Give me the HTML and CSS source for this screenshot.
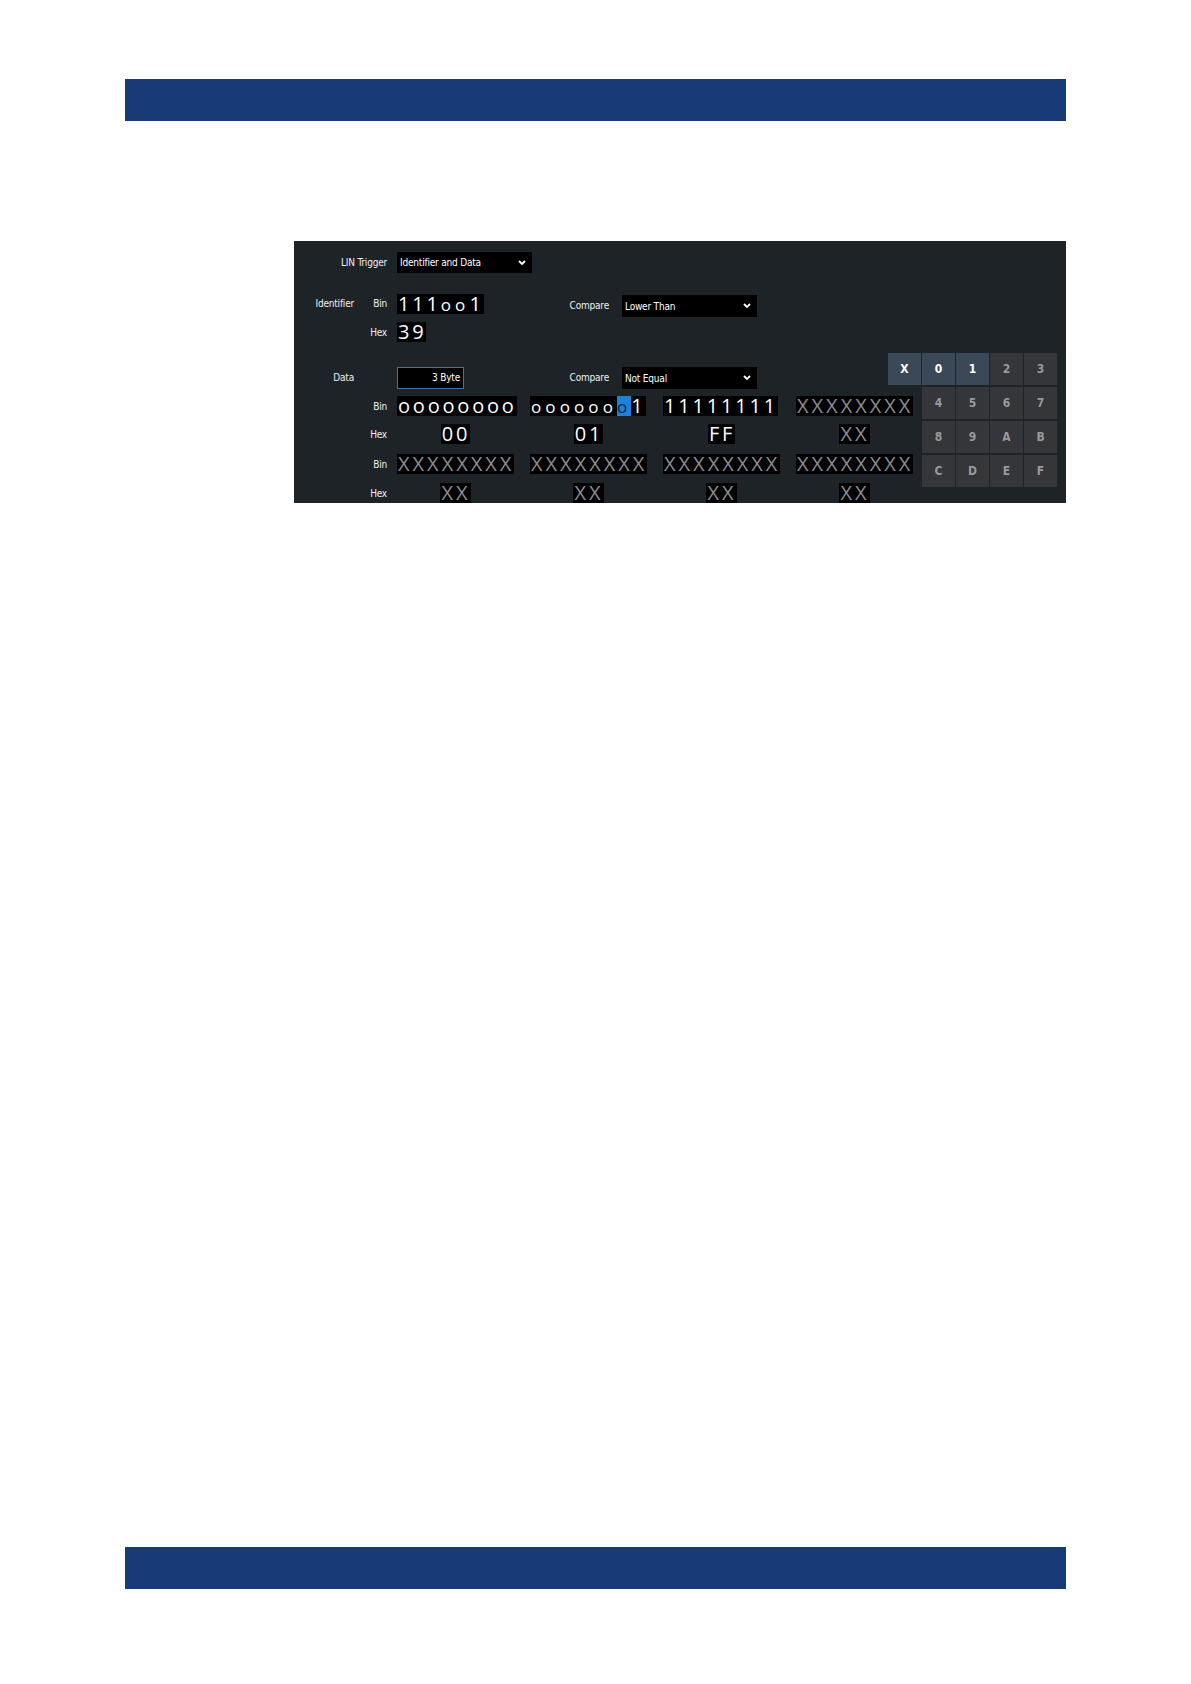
FILE: index.html
```html
<!DOCTYPE html>
<html>
<head>
<meta charset="utf-8">
<link rel="stylesheet" href="styles.css">
</head>
<body>
<div class="bar bar-top"></div>

<div class="panel">
  <div class="row row-a">
    <span class="lbl lbl-wide">LIN Trigger</span>
    <div class="select">
      <span>Identifier and Data</span>
      <svg class="chev" width="8" height="6" viewBox="0 0 8 6"><polyline points="1,1 4,4 7,1" fill="none" stroke="#fff" stroke-width="1.8"/></svg>
    </div>
  </div>

  <div class="row row-b">
    <span class="lbl lbl-main">Identifier</span>
    <span class="lbl lbl-sub">Bin</span>
    <div class="vals">
      <div class="cell"><span class="digits">111<span class="so">oo</span>1</span></div>
      <div class="compare">
        <span class="lbl lbl-cmp">Compare</span>
        <div class="select">
          <span>Lower Than</span>
          <svg class="chev" width="8" height="6" viewBox="0 0 8 6"><polyline points="1,1 4,4 7,1" fill="none" stroke="#fff" stroke-width="1.8"/></svg>
        </div>
      </div>
    </div>
  </div>

  <div class="row row-c">
    <span class="lbl lbl-main"></span>
    <span class="lbl lbl-sub">Hex</span>
    <div class="vals">
      <div class="cell"><span class="digits">39</span></div>
    </div>
  </div>

  <div class="row row-d">
    <span class="lbl lbl-main">Data</span>
    <span class="lbl lbl-sub"></span>
    <div class="vals">
      <div class="cell"><div class="input">3 Byte</div></div>
      <div class="compare">
        <span class="lbl lbl-cmp">Compare</span>
        <div class="select">
          <span>Not Equal</span>
          <svg class="chev" width="8" height="6" viewBox="0 0 8 6"><polyline points="1,1 4,4 7,1" fill="none" stroke="#fff" stroke-width="1.8"/></svg>
        </div>
      </div>
    </div>
  </div>

  <div class="row row-e">
    <span class="lbl lbl-main"></span>
    <span class="lbl lbl-sub">Bin</span>
    <div class="vals grid4">
      <div class="cell"><span class="digits">oooooooo</span></div>
      <div class="cell"><span class="digits"><span class="so">oooooo</span><span class="cursor"><span class="so">o</span></span>1</span></div>
      <div class="cell"><span class="digits">11111111</span></div>
      <div class="cell"><span class="digits undef">XXXXXXXX</span></div>
    </div>
  </div>

  <div class="row row-f">
    <span class="lbl lbl-main"></span>
    <span class="lbl lbl-sub">Hex</span>
    <div class="vals grid4 center">
      <div class="cell"><span class="digits">00</span></div>
      <div class="cell"><span class="digits">01</span></div>
      <div class="cell"><span class="digits">FF</span></div>
      <div class="cell"><span class="digits undef">XX</span></div>
    </div>
  </div>

  <div class="row row-g">
    <span class="lbl lbl-main"></span>
    <span class="lbl lbl-sub">Bin</span>
    <div class="vals grid4">
      <div class="cell"><span class="digits undef">XXXXXXXX</span></div>
      <div class="cell"><span class="digits undef">XXXXXXXX</span></div>
      <div class="cell"><span class="digits undef">XXXXXXXX</span></div>
      <div class="cell"><span class="digits undef">XXXXXXXX</span></div>
    </div>
  </div>

  <div class="row row-h">
    <span class="lbl lbl-main"></span>
    <span class="lbl lbl-sub">Hex</span>
    <div class="vals grid4 center">
      <div class="cell"><span class="digits undef">XX</span></div>
      <div class="cell"><span class="digits undef">XX</span></div>
      <div class="cell"><span class="digits undef">XX</span></div>
      <div class="cell"><span class="digits undef">XX</span></div>
    </div>
  </div>

  <div class="keypad">
    <div class="key key-act">X</div>
    <div class="key key-act">0</div>
    <div class="key key-act">1</div>
    <div class="key">2</div>
    <div class="key">3</div>
    <div class="key-empty"></div>
    <div class="key">4</div>
    <div class="key">5</div>
    <div class="key">6</div>
    <div class="key">7</div>
    <div class="key-empty"></div>
    <div class="key">8</div>
    <div class="key">9</div>
    <div class="key">A</div>
    <div class="key">B</div>
    <div class="key-empty"></div>
    <div class="key">C</div>
    <div class="key">D</div>
    <div class="key">E</div>
    <div class="key">F</div>
  </div>
</div>

<div class="bar bar-bottom"></div>
</body>
</html>
```

FILE: styles.css
```css
html, body {
  margin: 0;
  padding: 0;
  background: #ffffff;
}

body {
  width: 1191px;
  font-family: "DejaVu Sans Condensed", "DejaVu Sans", sans-serif;
}

.bar {
  height: 42px;
  margin: 0 125px;
  background: #183a77;
}

.bar-top {
  margin-top: 79px;
}

.bar-bottom {
  margin-top: 1044px;
}

.panel {
  position: relative;
  box-sizing: border-box;
  margin-top: 120px;
  margin-left: 294px;
  width: 772px;
  height: 262px;
  padding-top: 11px;
  background: #1e2327;
  display: flex;
  flex-direction: column;
}

.row {
  display: flex;
  align-items: center;
  height: 20px;
}

.row-a { height: 21px; }
.row-b { margin-top: 21px; align-items: flex-start; }
.row-b .lbl { line-height: 20px; }
.row-c { margin-top: 8px; }
.row-d { margin-top: 25px; height: 22px; }
.row-e { margin-top: 7px; }
.row-f { margin-top: 8px; }
.row-g { margin-top: 10px; }
.row-h { margin-top: 9px; }

.lbl {
  color: #f0f0f0;
  font-size: 10px;
  letter-spacing: -0.2px;
  text-align: right;
  white-space: nowrap;
}

.lbl-wide { width: 93px; }
.lbl-main { width: 60px; }
.lbl-sub { width: 33px; }
.lbl-cmp { width: 79px; }

.vals {
  margin-left: 10px;
  display: flex;
  align-items: flex-start;
}

.row-a .select { margin-left: 10px; }

.vals .cell {
  width: 117px;
  display: flex;
}

.grid4 {
  display: grid;
  grid-template-columns: repeat(4, 117px);
  column-gap: 16px;
}

.center .cell {
  justify-content: center;
}

.compare {
  margin-left: 16px;
  display: flex;
  align-items: center;
  margin-top: 1px;
}

.row-d .compare { margin-top: 0; }
.row-d .lbl { line-height: 22px; }

.select {
  box-sizing: border-box;
  width: 135px;
  height: 21px;
  margin-left: 13px;
  padding: 0 6px 0 3px;
  background: #000000;
  color: #ffffff;
  font-size: 10px;
  letter-spacing: -0.2px;
  display: flex;
  align-items: center;
  justify-content: space-between;
}

.compare .select { height: 22px; }

.chev { display: block; }

.input {
  box-sizing: border-box;
  width: 67px;
  height: 22px;
  border: 1px solid #3f73ad;
  background: #000000;
  color: #ffffff;
  font-size: 10px;
  letter-spacing: -0.2px;
  text-align: right;
  line-height: 20px;
  padding-right: 3px;
}

.digits {
  display: inline-block;
  height: 20px;
  padding-left: 1px;
  background: #000000;
  color: #ffffff;
  font-family: "Open Sans", "Liberation Sans", sans-serif;
  font-size: 20px;
  line-height: 20px;
  letter-spacing: 2.8px;
  white-space: nowrap;
}

.digits.undef {
  color: #8c8c8c;
  letter-spacing: 3px;
}

.so {
  font-size: 17px;
  letter-spacing: 4.1px;
}

.cursor {
  display: inline-block;
  background: #1a84dc;
  color: #0b2140;
  height: 20px;
  vertical-align: top;
}

.keypad {
  position: absolute;
  left: 594px;
  top: 112px;
  display: grid;
  grid-template-columns: repeat(5, 33px);
  grid-auto-rows: 32px;
  column-gap: 1px;
  row-gap: 2px;
}

.key {
  background: #343639;
  color: #9a9a9a;
  font-family: "DejaVu Sans Condensed", "DejaVu Sans", sans-serif;
  font-weight: bold;
  font-size: 12px;
  display: flex;
  align-items: center;
  justify-content: center;
}

.key-act {
  background: #3b4857;
  color: #ffffff;
}
```
